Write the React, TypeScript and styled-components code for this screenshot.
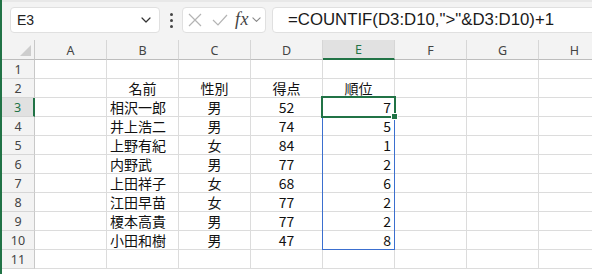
import React from "react";
import styled, { createGlobalStyle, css } from "styled-components";

const GREEN = "#217346";
const BLUE = "#3b6fcf";
const GRID = "#dcdcdc";
const ROW_H = 19;
const HEAD_H = 20;
const ROWHEAD_W = 33;
const COL_W = 72;

const GlobalStyle = createGlobalStyle`
  html, body {
    margin: 0;
    padding: 0;
    background: #fff;
  }
  * {
    box-sizing: border-box;
  }
`;

const Window = styled.div`
  width: 592px;
  height: 274px;
  overflow: hidden;
  background: #fff;
  border-left: 2px solid ${GREEN};
  display: flex;
  flex-direction: column;
  font-family: "Liberation Sans", Arial, sans-serif;
`;

const FormulaBar = styled.div`
  height: 40px;
  flex: none;
  background: #f3f3f3;
  border-top: 2px solid #e8e8e8;
  display: flex;
  align-items: flex-start;
  padding: 5px 0 0 8px;
`;

const Box = styled.div`
  height: 26px;
  background: #fff;
  border: 1px solid #e0e0e0;
  border-radius: 4px;
  display: flex;
  align-items: center;
`;

const NameBox = styled(Box)`
  width: 150px;
  padding: 0 8px 0 6px;
  justify-content: space-between;
  font-size: 14px;
  color: #222;
`;

const Dots = styled.div`
  width: 22px;
  height: 26px;
  display: flex;
  flex-direction: column;
  align-items: center;
  justify-content: center;
  gap: 3px;
  span {
    width: 3px;
    height: 3px;
    border-radius: 50%;
    background: #444;
  }
`;

const IconBox = styled(Box)`
  width: 84px;
  padding: 0 0 0 4px;
`;

const Fx = styled.span`
  font-family: "Liberation Serif", "Times New Roman", serif;
  font-style: italic;
  font-size: 18px;
  color: #444;
  margin: 0 3px 2px 5px;
  letter-spacing: 0.5px;
`;

const FormulaBox = styled(Box)`
  flex: 1;
  margin-left: 6px;
  margin-right: -12px;
  padding-left: 15px;
  font-size: 16.8px;
  color: #1a1a1a;
  white-space: nowrap;
`;

const Sheet = styled.div`
  position: relative;
  display: grid;
  grid-template-columns: ${ROWHEAD_W}px repeat(8, ${COL_W}px);
  grid-template-rows: ${HEAD_H}px repeat(11, ${ROW_H}px);
`;

const Corner = styled.div`
  background: #f3f3f3;
  border-right: 1px solid #c8c8c8;
  border-bottom: 1px solid #bdbdbd;
  position: relative;
  &::after {
    content: "";
    position: absolute;
    right: 3px;
    bottom: 3px;
    border-style: solid;
    border-width: 0 0 11px 11px;
    border-color: transparent transparent #cdcdcd transparent;
  }
`;

const ColHead = styled.div<{ $active?: boolean }>`
  background: #f3f3f3;
  border-right: 1px solid #d6d6d6;
  border-bottom: 1px solid #bdbdbd;
  display: flex;
  align-items: center;
  justify-content: center;
  font-family: "Noto Sans", "Liberation Sans", sans-serif;
  font-size: 12.5px;
  color: #444;
  padding-top: 1px;
  ${(p) =>
    p.$active &&
    css`
      background: #e1e1e1;
      color: ${GREEN};
      border-bottom: 2px solid ${GREEN};
    `}
`;

const RowHead = styled.div<{ $active?: boolean }>`
  background: #f3f3f3;
  border-right: 1px solid #c8c8c8;
  border-bottom: 1px solid #d6d6d6;
  display: flex;
  align-items: center;
  justify-content: center;
  font-family: "Noto Sans", "Liberation Sans", sans-serif;
  font-size: 12.5px;
  color: #444;
  ${(p) =>
    p.$active &&
    css`
      background: #e1e1e1;
      color: ${GREEN};
      border-right: 2px solid ${GREEN};
    `}
`;

const Cell = styled.div<{ $align?: "left" | "center" | "right" }>`
  border-right: 1px solid ${GRID};
  border-bottom: 1px solid ${GRID};
  display: flex;
  align-items: center;
  justify-content: ${(p) =>
    p.$align === "right" ? "flex-end" : p.$align === "center" ? "center" : "flex-start"};
  padding: 0 3px;
  font-family: "Noto Sans CJK JP", "Noto Sans", sans-serif;
  font-size: 14px;
  color: #111;
  white-space: nowrap;
  overflow: hidden;
`;

const Range = styled.div`
  position: absolute;
  border: 1px solid ${BLUE};
  pointer-events: none;
`;

const Active = styled.div`
  position: absolute;
  border: 2px solid ${GREEN};
  pointer-events: none;
`;

const Handle = styled.div`
  position: absolute;
  width: 7px;
  height: 7px;
  background: ${GREEN};
  border: 1px solid #fff;
`;

const columns = ["A", "B", "C", "D", "E", "F", "G", "H"];

const rows: (string | number)[][] = [
  ["相沢一郎", "男", 52, 7],
  ["井上浩二", "男", 74, 5],
  ["上野有紀", "女", 84, 1],
  ["内野武", "男", 77, 2],
  ["上田祥子", "女", 68, 6],
  ["江田早苗", "女", 77, 2],
  ["榎本高貴", "男", 77, 2],
  ["小田和樹", "男", 47, 8],
];

const Chevron = ({ size = 10, color = "#444" }: { size?: number; color?: string }) => (
  <svg width={size} height={size * 0.6} viewBox="0 0 10 6" fill="none">
    <path d="M1 1l4 4 4-4" stroke={color} strokeWidth="1.2" strokeLinecap="round" strokeLinejoin="round" />
  </svg>
);

const sheetRows = (): (string | number)[][] => {
  const out: (string | number)[][] = [];
  out.push([]);
  out.push(["名前", "性別", "得点", "順位"]);
  rows.forEach((r) => out.push(r));
  out.push([]);
  return out;
};

const colX = (i: number) => ROWHEAD_W + COL_W * i;
const rowY = (i: number) => HEAD_H + ROW_H * i;

export default function App() {
  const data = sheetRows();
  // E3 is active, E3:E10 selected
  const left = colX(4) - 1;
  const top = rowY(2) - 1;
  return (
    <>
      <GlobalStyle />
      <Window>
        <FormulaBar>
          <NameBox>
            <span>E3</span>
            <Chevron size={10} color="#333" />
          </NameBox>
          <Dots>
            <span />
            <span />
            <span />
          </Dots>
          <IconBox>
            <svg width="16" height="16" viewBox="0 0 16 16" fill="none">
              <path d="M2 2l12 12M14 2L2 14" stroke="#b4b4b4" strokeWidth="1.2" />
            </svg>
            <svg width="20" height="16" viewBox="0 0 20 16" fill="none" style={{ marginLeft: 7 }}>
              <path d="M3 8l5 5L17 3" stroke="#b4b4b4" strokeWidth="1.2" />
            </svg>
            <Fx>fx</Fx>
            <Chevron size={9} color="#888" />
          </IconBox>
          <FormulaBox>=COUNTIF(D3:D10,"&gt;"&amp;D3:D10)+1</FormulaBox>
        </FormulaBar>
        <Sheet>
          <Corner />
          {columns.map((c) => (
            <ColHead key={c} $active={c === "E"}>
              {c}
            </ColHead>
          ))}
          {data.map((r, ri) => (
            <React.Fragment key={ri}>
              <RowHead $active={ri === 2}>{ri + 1}</RowHead>
              {columns.map((c, ci) => {
                let v: string | number = "";
                let align: "left" | "center" | "right" = "left";
                if (ci >= 1 && ci <= 4 && r.length) {
                  v = r[ci - 1];
                  if (ri === 1) align = "center";
                  else if (ci === 1) align = "left";
                  else if (ci === 2 || ci === 3) align = "center";
                  else align = "right";
                }
                return (
                  <Cell key={c} $align={align}>
                    {v}
                  </Cell>
                );
              })}
            </React.Fragment>
          ))}
          <Range style={{ left: left, top: top, width: COL_W + 1, height: ROW_H * 8 + 1 }} />
          <Active style={{ left: left - 1, top: top - 1, width: COL_W + 3, height: ROW_H + 3 }} />
          <Handle style={{ left: left + COL_W - 3, top: top + ROW_H - 3 }} />
        </Sheet>
      </Window>
    </>
  );
}
